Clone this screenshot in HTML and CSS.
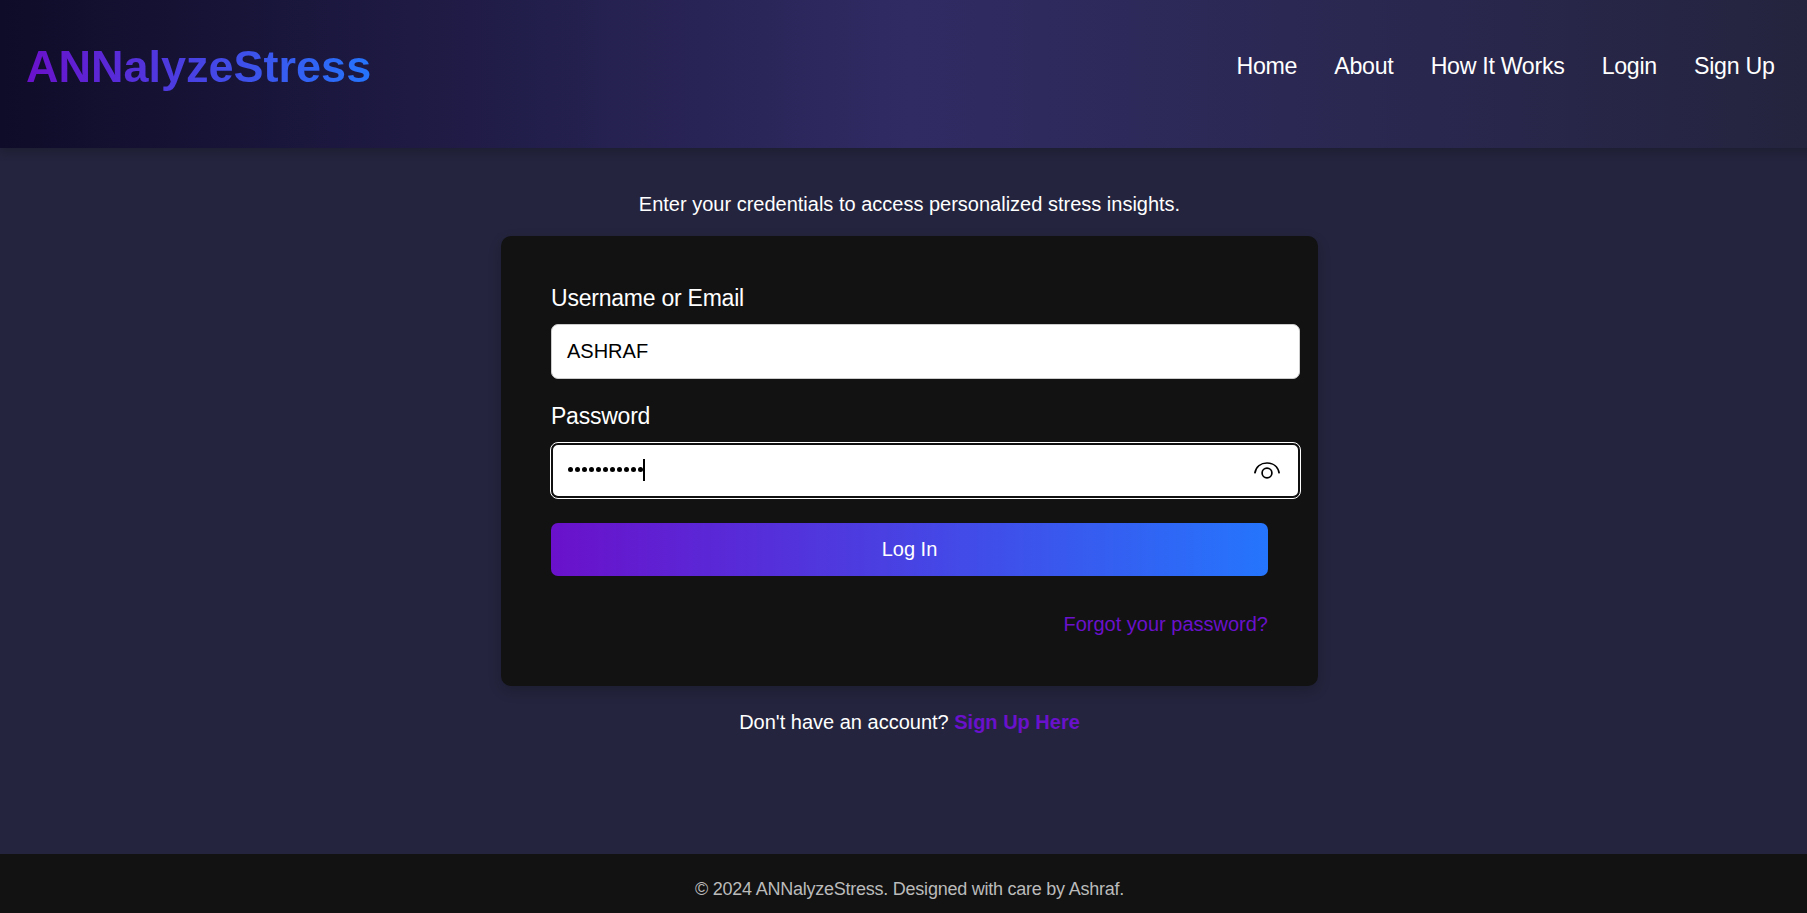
FILE: index.html
```html
<!DOCTYPE html>
<html lang="en">
<head>
<meta charset="utf-8">
<title>ANNalyzeStress - Login</title>
<link rel="stylesheet" href="styles.css">
</head>
<body>
<div class="page">
  <header class="header">
    <div class="logo">ANNalyzeStress</div>
    <nav class="nav">
      <a href="#">Home</a>
      <a href="#">About</a>
      <a href="#">How It Works</a>
      <a href="#">Login</a>
      <a href="#">Sign Up</a>
    </nav>
  </header>
  <main class="main">
    <p class="intro">Enter your credentials to access personalized stress insights.</p>
    <form class="card">
      <label class="label">Username or Email</label>
      <div class="field">ASHRAF</div>
      <label class="label">Password</label>
      <div class="field field-focus">
        <span class="dots"><i></i><i></i><i></i><i></i><i></i><i></i><i></i><i></i><i></i><i></i><i></i></span>
        <span class="caret"></span>
        <svg class="eye" width="28" height="20" viewBox="0 0 28 20" fill="none" stroke="#000" stroke-width="1.7"><path d="M1.8 12.3C3 5.6 8 2 14 2S25 5.6 26.2 12.3"/><circle cx="14" cy="12" r="4.9"/></svg>
      </div>
      <button class="submit" type="button">Log In</button>
      <a class="forgot" href="#">Forgot your password?</a>
    </form>
    <p class="signup">Don't have an account? <a href="#">Sign Up Here</a></p>
  </main>
  <footer class="footer">© 2024 ANNalyzeStress. Designed with care by Ashraf.</footer>
</div>
</body>
</html>
```
FILE: styles.css
```css
* { box-sizing: border-box; }
body {
  margin: 0;
  overflow: hidden;
  background: #24243e;
  color: #fff;
  font-family: "Liberation Sans", Arial, sans-serif;
  font-size: 20px;
}
a { text-decoration: none; }
p { margin: 0; }
.page {
  width: 1819px;
  height: 913px;
  display: flex;
  flex-direction: column;
}
.header {
  height: 148px;
  padding: 41px 44.5px 0 26px;
  display: flex;
  justify-content: space-between;
  align-items: flex-start;
  background: linear-gradient(90deg, #0f0c29, #302b63, #24243e);
  box-shadow: 0 5px 8px rgba(0, 0, 0, .17);
}
.logo {
  font-size: 45px;
  line-height: 52px;
  font-weight: bold;
  background: linear-gradient(90deg, #6a11cb, #2575fc);
  -webkit-background-clip: text;
  background-clip: text;
  color: transparent;
}
.nav {
  display: flex;
  gap: 37.2px;
  padding-top: 10px;
}
.nav a {
  color: #fff;
  font-size: 23.2px;
  letter-spacing: -.3px;
  line-height: 30px;
}
.main {
  flex: 1;
  display: flex;
  flex-direction: column;
  align-items: center;
  padding-top: 41px;
}
.intro { line-height: 30px; }
.card {
  width: 817px;
  height: 450px;
  margin-top: 17px;
  padding: 47px 50px 0;
  display: flex;
  flex-direction: column;
  background: #121212;
  border-radius: 10px;
  box-shadow: 0 5px 13px rgba(0, 0, 0, .2);
}
.label {
  font-size: 23px;
  letter-spacing: -.23px;
  line-height: 30px;
  margin-bottom: 11px;
}
.field {
  width: 749px;
  height: 55px;
  flex: none;
  margin-bottom: 22px;
  padding: 0 15px;
  display: flex;
  align-items: center;
  background: #fff;
  color: #000;
  border: 1px solid #ccc;
  border-radius: 7px;
}
.label + .field-focus {
  margin-top: 1px;
  margin-bottom: 25px;
  padding: 0 15px;
  border: 2px solid #101010;
  outline: 1px solid #fff;
}
.dots { display: flex; gap: 2px; margin-bottom: 2px; }
.dots i {
  width: 5px;
  height: 5px;
  border-radius: 50%;
  background: #000;
}
.caret { width: 2px; height: 22px; margin-bottom: 1px; background: #000; }
.eye { margin-left: auto; margin-right: 2px; }
.submit {
  height: 53px;
  flex: none;
  border: 0;
  border-radius: 7px;
  background: linear-gradient(90deg, #6a11cb, #2575fc);
  color: #fff;
  font: 20px "Liberation Sans", Arial, sans-serif;
}
.forgot {
  align-self: flex-end;
  margin-top: 33px;
  line-height: 30px;
  color: #6a11cb;
}
.signup { margin-top: 21px; line-height: 30px; }
.signup a { color: #6a11cb; font-weight: bold; }
.footer {
  height: 59px;
  padding-top: 20px;
  text-align: center;
  background: #121212;
  color: #bbb;
  font-size: 18px;
  letter-spacing: -.24px;
  line-height: 30px;
}
```
